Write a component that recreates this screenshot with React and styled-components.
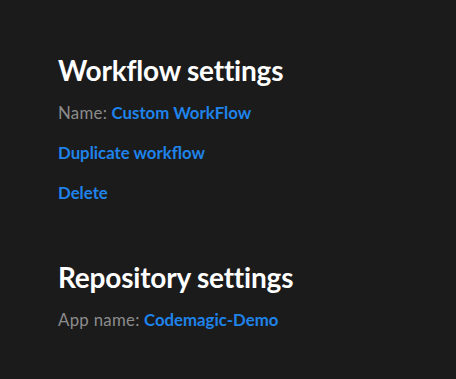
import React from "react";
import styled, { createGlobalStyle } from "styled-components";

const GlobalStyle = createGlobalStyle`
  html, body {
    margin: 0;
    padding: 0;
    background: #1b1b1b;
  }
  body {
    font-family: Lato, "Noto Sans", sans-serif;
  }
`;

const Page = styled.div`
  min-height: 379px;
  background: #1b1b1b;
  padding: 52px 58px 0;
  box-sizing: border-box;
`;

const Section = styled.section`
  display: flex;
  flex-direction: column;
  margin-bottom: ${(p) => p.gap || 0}px;
`;

const Title = styled.h2`
  margin: 0 0 15px;
  color: #ffffff;
  font-size: 28px;
  font-weight: 700;
  line-height: 36px;
  letter-spacing: -0.2px;
`;

const Row = styled.div`
  font-size: 16.8px;
  line-height: 20px;
  color: #8c8c8c;
  margin-bottom: 20px;
`;

const Label = styled.span`
  letter-spacing: 0.3px;
`;

const Link = styled.a`
  color: #1f83ea;
  font-weight: 700;
  text-decoration: none;
  cursor: pointer;
`;

const App = () => (
  <>
    <GlobalStyle />
    <Page>
      <Section gap={36}>
        <Title>Workflow settings</Title>
        <Row>
          <Label>Name:</Label> <Link>Custom WorkFlow</Link>
        </Row>
        <Row>
          <Link>Duplicate workflow</Link>
        </Row>
        <Row>
          <Link>Delete</Link>
        </Row>
      </Section>
      <Section>
        <Title>Repository settings</Title>
        <Row>
          <Label>App name:</Label> <Link>Codemagic-Demo</Link>
        </Row>
      </Section>
    </Page>
  </>
);

export default App;
